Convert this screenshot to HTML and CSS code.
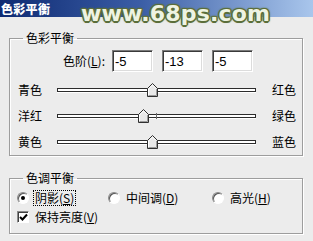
FILE: index.html
```html
<!DOCTYPE html>
<html>
<head>
  <meta charset="utf-8">
  <title>色彩平衡</title>
  <link rel="stylesheet" href="styles.css">
</head>
<body>
  <div class="window">
    <div class="titlebar">色彩平衡</div>
    <span class="watermark">www.68ps.com</span>

    <fieldset class="group balance">
      <legend>色彩平衡</legend>
      <div class="levels">
        <label class="levels-label">色阶(<u>L</u>):</label>
        <input class="field" type="text" value="-5">
        <input class="field" type="text" value="-13">
        <input class="field" type="text" value="-5">
      </div>
      <div class="slider-row">
        <span class="side left">青色</span>
        <div class="track">
          <span class="tick"></span>
          <svg class="thumb" style="left: 89px" width="11" height="14" viewBox="0 0 11 14">
            <polygon points="0.5,5.5 5.5,0.5 10.5,5.5 10.5,13.5 0.5,13.5" fill="#e9e9e9" stroke="#303030"/>
            <polyline points="1.5,12.5 1.5,6 5.5,2 9,5.5" fill="none" stroke="#fff"/>
            <polyline points="9.5,6 9.5,12.5 1.5,12.5" fill="none" stroke="#9a9a9a"/>
          </svg>
        </div>
        <span class="side right">红色</span>
      </div>
      <div class="slider-row">
        <span class="side left">洋红</span>
        <div class="track">
          <span class="tick"></span>
          <svg class="thumb" style="left: 80px" width="11" height="14" viewBox="0 0 11 14">
            <polygon points="0.5,5.5 5.5,0.5 10.5,5.5 10.5,13.5 0.5,13.5" fill="#e9e9e9" stroke="#303030"/>
            <polyline points="1.5,12.5 1.5,6 5.5,2 9,5.5" fill="none" stroke="#fff"/>
            <polyline points="9.5,6 9.5,12.5 1.5,12.5" fill="none" stroke="#9a9a9a"/>
          </svg>
        </div>
        <span class="side right">绿色</span>
      </div>
      <div class="slider-row">
        <span class="side left">黄色</span>
        <div class="track">
          <span class="tick"></span>
          <svg class="thumb" style="left: 89px" width="11" height="14" viewBox="0 0 11 14">
            <polygon points="0.5,5.5 5.5,0.5 10.5,5.5 10.5,13.5 0.5,13.5" fill="#e9e9e9" stroke="#303030"/>
            <polyline points="1.5,12.5 1.5,6 5.5,2 9,5.5" fill="none" stroke="#fff"/>
            <polyline points="9.5,6 9.5,12.5 1.5,12.5" fill="none" stroke="#9a9a9a"/>
          </svg>
        </div>
        <span class="side right">蓝色</span>
      </div>
    </fieldset>

    <fieldset class="group tone">
      <legend>色调平衡</legend>
      <div class="radio-row">
        <label class="option first">
          <span class="radio checked"></span>
          <span class="focus">阴影(<u>S</u>)</span>
        </label>
        <label class="option second">
          <span class="radio"></span>
          <span>中间调(<u>D</u>)</span>
        </label>
        <label class="option">
          <span class="radio"></span>
          <span>高光(<u>H</u>)</span>
        </label>
      </div>
      <div class="check-row">
        <label class="option">
          <span class="checkbox">
            <svg width="9" height="9" viewBox="0 0 9 9">
              <polyline points="1,4 3.5,6.5 8,1.5" fill="none" stroke="#000" stroke-width="2"/>
            </svg>
          </span>
          <span>保持亮度(<u>V</u>)</span>
        </label>
      </div>
    </fieldset>
  </div>
</body>
</html>
```

FILE: styles.css
```css
body, html {
  margin: 0;
  padding: 0;
  width: 313px;
  height: 241px;
  overflow: hidden;
  background: #ececec;
  color: #000;
  font-family: "Noto Sans CJK SC", "Noto Sans", sans-serif;
  font-size: 12px;
  line-height: 14px;
}
.window {
  position: relative;
  width: 313px;
  height: 241px;
}
/* title bar of the dialog */
.titlebar {
  height: 17px;
  box-sizing: border-box;
  padding: 2px 0 0 1px;
  background: linear-gradient(to right, #0e2a72, #3b5ea6 45%, #a9c6ec);
  color: #fff;
  font-weight: 900;
  font-size: 12px;
  line-height: 13px;
  letter-spacing: 0.3px;
}
/* site watermark sits over the title bar */
.watermark {
  position: absolute;
  left: 81px;
  top: 1px;
  font-family: "DejaVu Sans", sans-serif;
  font-weight: bold;
  font-size: 22px;
  line-height: 26px;
  letter-spacing: 0.2px;
  color: #eef3e2;
  text-shadow:
    1.5px 0 0 #5b6e3a, -1.5px 0 0 #5b6e3a,
    0 1.5px 0 #5b6e3a, 0 -1.5px 0 #5b6e3a,
    1px 1px 1px #5b6e3a, -1px -1px 1px #5b6e3a,
    1px -1px 1px #5b6e3a, -1px 1px 1px #5b6e3a,
    0 0 3px #6d8048;
}

/* etched group boxes */
.group {
  margin: 14px 10px 0 9px;
  padding: 0;
  border: 1px solid #9d9d9d;
  box-shadow: 1px 1px 0 #fff, inset 1px 1px 0 #fff;
  min-width: 0;
}
.group legend {
  margin-left: 13px;
  padding: 0 3px;
  font-size: 12px;
  line-height: 14px;
}
.tone {
  margin-top: 15px;
  padding: 3px 0 7px;
}

/* levels row */
.levels {
  display: flex;
  align-items: center;
  height: 22px;
  margin-top: 5px;
  margin-bottom: 5px;
}
.levels-label {
  width: 102px;
  box-sizing: border-box;
  padding-right: 7px;
  text-align: right;
}
.field {
  width: 41px;
  height: 22px;
  box-sizing: border-box;
  margin: 0 9px 0 0;
  padding: 1px 2px 0;
  border: 1px solid;
  border-color: #7a7a7a #fff #fff #7a7a7a;
  box-shadow: inset 1px 1px 0 #3a3a3a, inset -1px -1px 0 #dcdcdc;
  background: #fff;
  font-family: "Liberation Sans", sans-serif;
  font-size: 13px;
  color: #000;
  outline: none;
}

/* colour sliders */
.slider-row {
  display: flex;
  align-items: center;
  height: 26px;
  padding-left: 8px;
}
.side.left {
  width: 39px;
}
.side.right {
  margin-left: 16px;
}
.track {
  position: relative;
  width: 197px;
  height: 2px;
  border: 1px solid #2c2c2c;
  background: #fff;
  box-shadow: 0 1px 0 #fff;
}
.tick {
  position: absolute;
  left: 98px;
  top: -2px;
  width: 1px;
  height: 6px;
  background: #6a6a6a;
}
.thumb {
  position: absolute;
  top: -6px;
  display: block;
}

/* tone balance options */
.radio-row, .check-row {
  display: flex;
  align-items: center;
  height: 19px;
  padding-left: 7px;
}
.option {
  display: flex;
  align-items: center;
}
.option.first {
  width: 91px;
}
.option.second {
  width: 104px;
}
.radio {
  position: relative;
  width: 12px;
  height: 12px;
  box-sizing: border-box;
  margin-right: 6px;
  border: 1px solid;
  border-color: #8a8a8a #fff #fff #8a8a8a;
  border-radius: 50%;
  background: #fff;
  box-shadow: inset 1px 1px 0 #555;
}
.radio.checked::after {
  content: "";
  position: absolute;
  left: 3px;
  top: 3px;
  width: 4px;
  height: 4px;
  border-radius: 50%;
  background: #000;
}
.focus {
  outline: 1px dotted #000;
  outline-offset: 0;
  padding: 0 1px;
  margin-left: -1px;
}
.checkbox {
  display: flex;
  align-items: center;
  justify-content: center;
  width: 12px;
  height: 12px;
  box-sizing: border-box;
  margin-right: 6px;
  border: 1px solid;
  border-color: #8a8a8a #fff #fff #8a8a8a;
  background: #fff;
  box-shadow: inset 1px 1px 0 #404040;
}
.checkbox svg {
  display: block;
  margin: 1px 0 0 1px;
}
```
